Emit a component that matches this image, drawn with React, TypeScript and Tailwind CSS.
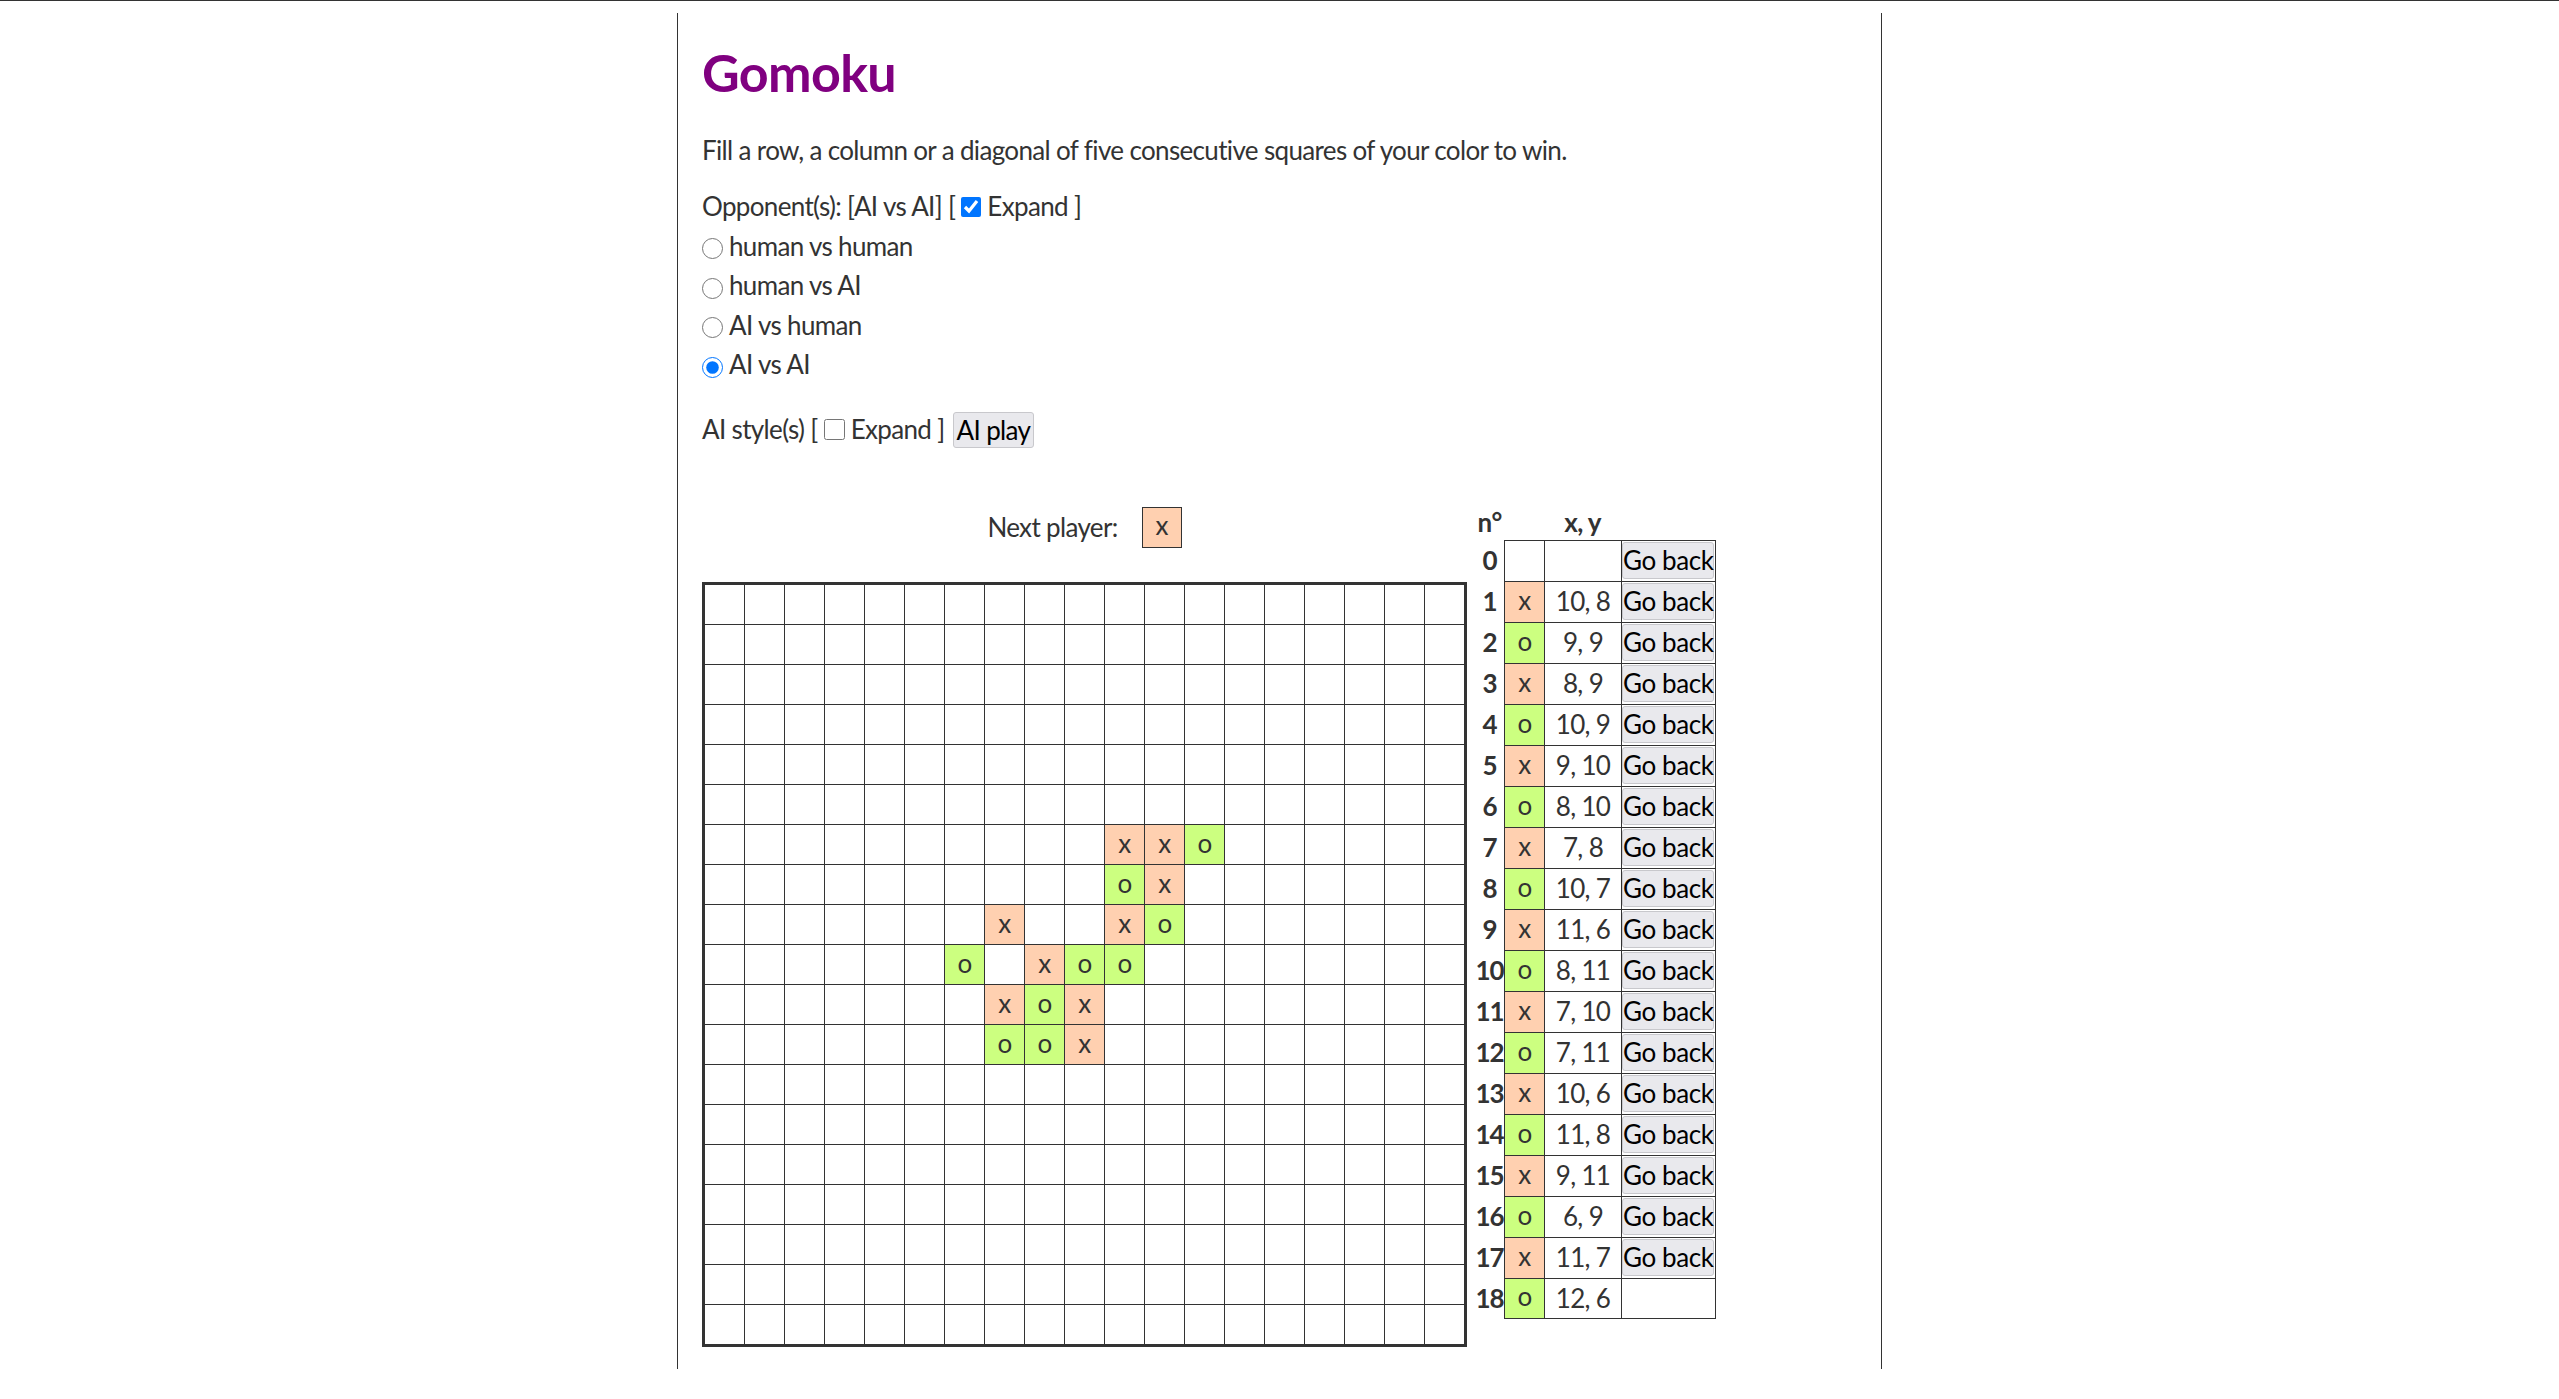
import React from "react";

type Move = { p: "x" | "o"; x: number; y: number };

const moves: Move[] = [
  { p: "x", x: 10, y: 8 },
  { p: "o", x: 9, y: 9 },
  { p: "x", x: 8, y: 9 },
  { p: "o", x: 10, y: 9 },
  { p: "x", x: 9, y: 10 },
  { p: "o", x: 8, y: 10 },
  { p: "x", x: 7, y: 8 },
  { p: "o", x: 10, y: 7 },
  { p: "x", x: 11, y: 6 },
  { p: "o", x: 8, y: 11 },
  { p: "x", x: 7, y: 10 },
  { p: "o", x: 7, y: 11 },
  { p: "x", x: 10, y: 6 },
  { p: "o", x: 11, y: 8 },
  { p: "x", x: 9, y: 11 },
  { p: "o", x: 6, y: 9 },
  { p: "x", x: 11, y: 7 },
  { p: "o", x: 12, y: 6 },
];

const SIZE = 19;
const opponents = ["human vs human", "human vs AI", "AI vs human", "AI vs AI"];

const pieceBg = (p?: string) =>
  p === "x" ? "bg-[#ffd0b0]" : p === "o" ? "bg-[#ccff80]" : "bg-white";

const Board = () => {
  const grid: (string | undefined)[][] = Array.from({ length: SIZE }, () =>
    Array(SIZE).fill(undefined)
  );
  moves.forEach((m) => (grid[m.y][m.x] = m.p));

  return (
    <div className="border-[3px] border-[#333] w-fit">
      <div className="grid grid-cols-[repeat(19,39px)] grid-rows-[repeat(19,39px)] gap-px bg-[#333]">
        {grid.map((row, y) =>
          row.map((cell, x) => (
            <div
              key={`${x}-${y}`}
              className={`flex items-center justify-center leading-none ${pieceBg(cell)}`}
            >
              {cell && <span className="-mt-[2px]">{cell}</span>}
            </div>
          ))
        )}
      </div>
    </div>
  );
};

const GoBack = () => (
  <button className="mt-px h-[37px] w-[92px] whitespace-nowrap rounded-[3px] border border-[#c8c8cc] bg-[#e9e9ed] p-0 text-[26px] leading-none tracking-[-0.4px] text-black">
    Go back
  </button>
);

const MoveTable = () => {
  const rows: (Move | null)[] = [null, ...moves];
  return (
    <div className="ml-[8px]">
      <div className="grid h-[35px] grid-cols-[29px_40px_77px_95px] font-bold leading-[35px]">
        <div className="text-center">n°</div>
        <div />
        <div className="text-center">x, y</div>
        <div />
      </div>
      {rows.map((m, i) => {
        const last = i === rows.length - 1;
        const b = last ? "border-b" : "";
        return (
          <div key={i} className="grid grid-cols-[29px_40px_77px_95px]">
            <div className="flex h-[41px] items-center justify-center pt-px font-bold tracking-[-1px]">
              {i}
            </div>
            <div
              className={`flex h-[41px] items-center justify-center border-l border-t border-[#333] ${b} ${pieceBg(
                m?.p
              )}`}
            >
              {m && <span className="-mt-[3px]">{m.p}</span>}
            </div>
            <div
              className={`flex h-[41px] items-center justify-center border-l border-t border-[#333] ${b}`}
            >
              {m ? `${m.x}, ${m.y}` : ""}
            </div>
            <div
              className={`h-[41px] border-l border-r border-t border-[#333] ${b}`}
            >
              {!last && <GoBack />}
            </div>
          </div>
        );
      })}
    </div>
  );
};

export default function App() {
  return (
    <div className="min-h-screen border-t border-[#333] bg-white font-['Lato','Segoe_UI',sans-serif] text-[26px] tracking-[-0.65px] text-[#333]">
      <div className="mx-auto mt-[12px] w-[1205px] border-x border-[#333] pb-[22px] pl-[24px]">
        <h1 className="pt-[27px] text-[52px] font-bold leading-[64px] text-[#800080]">
          Gomoku
        </h1>
        <p className="mt-[27px] leading-[39px]">
          Fill a row, a column or a diagonal of five consecutive squares of
          your color to win.
        </p>

        <div className="mt-[17px] leading-[39.5px]">
          <div className="flex items-center">
            <span>Opponent(s): [AI vs AI] [</span>
            <input
              type="checkbox"
              defaultChecked
              className="mx-[6px] h-[20px] w-[20px]"
            />
            <span>Expand ]</span>
          </div>
          {opponents.map((o) => (
            <label key={o} className="flex items-center">
              <input
                type="radio"
                name="opp"
                defaultChecked={o === "AI vs AI"}
                className="mt-[5px] h-[21px] w-[21px]"
              />
              <span className="ml-[6px]">{o}</span>
            </label>
          ))}
        </div>

        <div className="mt-[27px] flex h-[36px] items-center">
          <span>AI style(s) [</span>
          <input type="checkbox" className="mx-[6px] h-[21px] w-[21px]" />
          <span>Expand ]</span>
          <button className="ml-[8px] h-[36px] rounded-[3px] border border-[#c8c8cc] bg-[#e9e9ed] px-[3px] text-[26px] leading-none text-black">
            AI play
          </button>
        </div>

        <div className="mt-[57px] flex items-start">
          <div>
            <div className="mt-[2px] flex items-center justify-center gap-[24px]">
              <span>Next player:</span>
              <div className="flex h-[41px] w-[40px] items-center justify-center border border-[#333] bg-[#ffd0b0]">
                <span className="-mt-[3px]">x</span>
              </div>
            </div>
            <div className="mt-[34px]">
              <Board />
            </div>
          </div>
          <MoveTable />
        </div>
      </div>
    </div>
  );
}
